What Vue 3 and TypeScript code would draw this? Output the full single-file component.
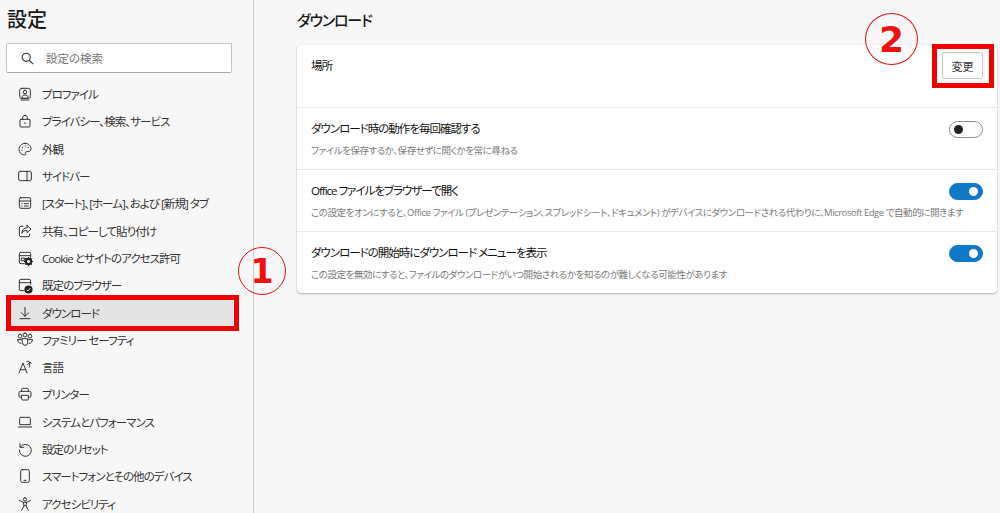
<script setup lang="ts">
interface NavItem { label: string; icon: string; active?: boolean }
const nav: NavItem[] = [
  { label: 'プロファイル', icon: 'M7 3.500h10a3 3 0 0 1 3 3v9a3 3 0 0 1-3 3H7a3 3 0 0 1-3-3v-9a3 3 0 0 1 3-3zM12 6.500a2.600 2.600 0 1 1 0 5.200 2.600 2.600 0 0 1 0-5.200zM7.500 16.500c0-2.500 2-3 4.500-3s4.500.5 4.500 3v2h-9zM6 21h12' },
  { label: 'プライバシー、検索、サービス', icon: 'M6 9.500h12a1.500 1.500 0 0 1 1.500 1.500v8.500A1.500 1.500 0 0 1 18 21H6a1.500 1.500 0 0 1-1.500-1.500V11A1.500 1.500 0 0 1 6 9.500zM8.500 9.500V7a3.500 3.500 0 0 1 7 0v2.500M12 14.500v1.500' },
  { label: '外観', icon: 'M12 3.500c5 0 9 3.500 9 8 0 3-2 4.500-4.500 4.500H14c-1.500 0-1.800 1.500-1 2.500s.3 2.500-1.500 2.500C6.500 21 3 17 3 12.500s4-9 9-9zM8 9.500h.5M7 14h.5M12.500 7.500h.5M16.500 10h.5' },
  { label: 'サイドバー', icon: 'M5 5h14a2.500 2.500 0 0 1 2.500 2.500v9A2.500 2.500 0 0 1 19 19H5a2.500 2.500 0 0 1-2.500-2.500v-9A2.500 2.500 0 0 1 5 5zM15 5v14' },
  { label: '[スタート]、[ホーム]、および [新規] タブ', icon: 'M6 4h12a2.500 2.500 0 0 1 2.500 2.500v11A2.500 2.500 0 0 1 18 20H6a2.500 2.500 0 0 1-2.500-2.500v-11A2.500 2.500 0 0 1 6 4zM3.500 9h17M7 13h.5M11 13h6M7 16.500h.5M11 16.500h6' },
  { label: '共有、コピーして貼り付け', icon: 'M9 5H6a2.500 2.500 0 0 0-2.500 2.500V18A2.500 2.500 0 0 0 6 20.500h10.500A2.500 2.500 0 0 0 19 18v-1.500M15 3.500l6 5.500-6 5.500V11c-4 0-6 1.500-7.500 4.500 0-5 2.500-8.500 7.500-8.500z' },
  { label: 'Cookie とサイトのアクセス許可', icon: 'M11 20.500H6A2.500 2.500 0 0 1 3.500 18V6A2.500 2.500 0 0 1 6 3.500h12A2.500 2.500 0 0 1 20.500 6v5M3.500 8.500h17M7 12h4v4H7z' },
  { label: '既定のブラウザー', icon: 'M11 20.500H6A2.500 2.500 0 0 1 3.500 18V6A2.500 2.500 0 0 1 6 3.500h12A2.500 2.500 0 0 1 20.500 6v5M3.500 8.500h17' },
  { label: 'ダウンロード', icon: 'M12 3.500v13.500M6.500 11.500l5.500 5.500 5.500-5.500M4.500 20.500h15', active: true },
  { label: 'ファミリー セーフティ', icon: 'M12 1.500a3 3 0 1 1 0 6 3 3 0 0 1 0-6zM4.500 3.500a2.800 2.800 0 1 1 0 5.600 2.800 2.800 0 0 1 0-5.600zM19.500 3.500a2.800 2.800 0 1 1 0 5.600 2.800 2.800 0 0 1 0-5.600zM1 11.500h6M17 11.500h6M1 11.500c0 3.500 1.500 5.500 5 5.500M23 11.500c0 3.500-1.500 5.500-5 5.500M8 10h8v6a4 4 0 0 1-8 0z' },
  { label: '言語', icon: 'M3 21l6-15 6 15M5.200 16h7.600M16 8.500l3.500-4 2 2M19 5v7M15 3.500h3' },
  { label: 'プリンター', icon: 'M7 8V5a1.500 1.500 0 0 1 1.500-1.500h7A1.500 1.500 0 0 1 17 5v3M7 17H5a2 2 0 0 1-2-2v-5a2 2 0 0 1 2-2h14a2 2 0 0 1 2 2v5a2 2 0 0 1-2 2h-2M7 14h10v6a1 1 0 0 1-1 1H8a1 1 0 0 1-1-1z' },
  { label: 'システムとパフォーマンス', icon: 'M5.500 5h13A1.500 1.500 0 0 1 20 6.500V16H4V6.500A1.500 1.500 0 0 1 5.500 5zM2 19.500h20' },
  { label: '設定のリセット', icon: 'M4.500 4v5.500H10M5 9a9 9 0 1 1-1.500 4.500' },
  { label: 'スマートフォンとその他のデバイス', icon: 'M8 2.500h8A2.500 2.500 0 0 1 18.500 5v14a2.500 2.500 0 0 1-2.500 2.500H8A2.500 2.500 0 0 1 5.500 19V5A2.500 2.500 0 0 1 8 2.500zM10.500 18.500h3' },
  { label: 'アクセシビリティ', icon: 'M12 2.500a2.500 2.500 0 1 1 0 5 2.500 2.500 0 0 1 0-5zM3.500 6.500l6 3h5l6-3M9.500 9.500l1 5-3.500 7M14.500 9.500l-1 5 3.500 7M10.500 14.500h3' },
]
interface Row { title: string; desc: string; on: boolean }
const rows: Row[] = [
  { title: 'ダウンロード時の動作を毎回確認する', desc: 'ファイルを保存するか、保存せずに開くかを常に尋ねる', on: false },
  { title: 'Office ファイルをブラウザーで開く', desc: 'この設定をオンにすると、Office ファイル (プレゼンテーション、スプレッドシート、ドキュメント) がデバイスにダウンロードされる代わりに、Microsoft Edge で自動的に開きます', on: true },
  { title: 'ダウンロードの開始時にダウンロード メニューを表示', desc: 'この設定を無効にすると、ファイルのダウンロードがいつ開始されるかを知るのが難しくなる可能性があります', on: true },
]
</script>

<template>
  <div class="page">
    <aside class="sidebar">
      <h1 class="app-title">設定</h1>
      <div class="search">
        <svg class="search-icon" viewBox="0 0 24 24"><path d="M10 3.500a6.500 6.500 0 1 1 0 13 6.500 6.500 0 0 1 0-13zM15 15l6 6" /></svg>
        <span>設定の検索</span>
      </div>
      <nav class="nav">
        <div v-for="item in nav" :key="item.label" class="nav-item" :class="{ active: item.active }">
          <svg class="nav-icon" viewBox="0 0 24 24"><path :d="item.icon" /></svg>
          <span class="nav-label">{{ item.label }}</span>
          <svg v-if="item.label === '既定のブラウザー'" class="nav-badge" viewBox="0 0 10 10">
            <circle cx="5" cy="5" r="4.500" fill="#222" />
            <path d="M3 5.200l1.500 1.400L7 3.600" fill="none" stroke="#fff" stroke-width="1" />
          </svg>
          <svg v-if="item.label.startsWith('Cookie')" class="nav-badge" viewBox="0 0 10 10">
            <circle cx="5" cy="5" r="3" fill="none" stroke="#222" stroke-width="2.400" />
            <path d="M5 0v2M5 8v2M0 5h2M8 5h2M1.500 1.500l1.400 1.400M7.100 7.100l1.400 1.400M1.500 8.500l1.400-1.400M7.100 2.900l1.400-1.400" stroke="#222" stroke-width="1.200" />
          </svg>
        </div>
      </nav>
      <div class="mark mark-nav" />
      <div class="circled circled-one">1</div>
    </aside>
    <main class="content">
      <h2 class="section-title">ダウンロード</h2>
      <section class="card">
        <div class="row row-location">
          <div class="row-title">場所</div>
          <button class="change">変更</button>
          <div class="mark mark-change" />
        </div>
        <div v-for="row in rows" :key="row.title" class="row">
          <div class="row-text">
            <div class="row-title">{{ row.title }}</div>
            <div class="row-desc">{{ row.desc }}</div>
          </div>
          <div class="toggle" :class="{ on: row.on }"><span class="knob" /></div>
        </div>
      </section>
      <div class="circled circled-two">2</div>
    </main>
  </div>
</template>

<style>
html, body { margin: 0; padding: 0; background: #f7f7f7; overflow: hidden; }
</style>

<style scoped>
.page {
  display: flex;
  width: 1000px;
  height: 513px;
  overflow: hidden;
  background: #f7f7f7;
  color: #262626;
  font-family: "Open Sans", "Noto Sans CJK JP", sans-serif;
  font-feature-settings: "palt";
}
.sidebar {
  position: relative;
  box-sizing: border-box;
  flex: 0 0 253px;
  height: 513px;
  border-right: 1px solid #cfcfcf;
  padding: 0 20px 0 6px;
}
.app-title {
  margin: 0;
  padding-left: 1px;
  height: 43px;
  font-size: 20px;
  line-height: 40px;
  font-weight: 500;
  color: #1a1a1a;
}
.search {
  box-sizing: border-box;
  display: flex;
  align-items: center;
  width: 226px;
  height: 30px;
  padding-left: 13px;
  gap: 11px;
  background: #fff;
  border: 1px solid #c4c4c4;
  border-bottom-color: #a8a8a8;
  border-radius: 2px;
  font-size: 11.500px;
  color: #777;
}
.search-icon { flex: none; width: 15px; height: 15px; fill: none; stroke: #333; stroke-width: 1.800; }
.nav { margin-top: 7.500px; margin-left: 5px; width: 222px; }
.nav-item {
  position: relative;
  display: flex;
  align-items: center;
  height: 27.300px;
  font-size: 11.500px;
  letter-spacing: -0.950px;
  color: #333;
  white-space: nowrap;
}
.nav-item.active { background: #e4e4e4; }
.nav-icon {
  flex: 0 0 16px;
  width: 16px;
  height: 16px;
  margin: 0 9px 0 6px;
  fill: none;
  stroke: #333;
  stroke-width: 1.500;
  stroke-linecap: round;
  stroke-linejoin: round;
}
.nav-badge { position: absolute; left: 13px; top: 13px; width: 9px; height: 9px; }
.mark { position: absolute; box-sizing: border-box; border: 5px solid #f00000; pointer-events: none; }
.mark-nav { left: 6px; top: 295px; width: 233px; height: 36px; }
.circled {
  position: absolute;
  box-sizing: border-box;
  display: flex;
  align-items: center;
  justify-content: center;
  border: 1.500px solid #f01010;
  border-radius: 50%;
  color: #f01010;
  font-family: "DejaVu Sans", sans-serif;
  font-weight: 700;
}
.circled-one { left: 238px; top: 247px; width: 48px; height: 48px; font-size: 33px; }
.circled-two { left: 611px; top: 13px; width: 53px; height: 52px; font-size: 36px; }
.content {
  position: relative;
  box-sizing: border-box;
  flex: 1;
  padding: 0 4px 0 43px;
}
.section-title {
  margin: 0;
  height: 45px;
  font-size: 15px;
  line-height: 41px;
  font-weight: 500;
  letter-spacing: -1.200px;
  color: #1a1a1a;
}
.card {
  width: 700px;
  background: #fff;
  border-radius: 4px;
  box-shadow: 0 1px 2px rgba(0, 0, 0, 0.28), 0 0 1px rgba(0, 0, 0, 0.16);
}
.row {
  position: relative;
  box-sizing: border-box;
  display: flex;
  align-items: center;
  justify-content: space-between;
  height: 62px;
  padding: 0 14px;
  border-top: 1px solid #e9e9e9;
}
.row-location { align-items: flex-start; border-top: none; padding-top: 12px; }
.row-text { min-width: 0; }
.row-title { font-size: 11.500px; line-height: 17px; font-weight: 400; letter-spacing: -1px; color: #111; }
.row-desc { margin-top: 7px; font-size: 9.500px; line-height: 14px; letter-spacing: -0.450px; color: #7a7a7a; white-space: nowrap; }
.change {
  flex: none;
  box-sizing: border-box;
  width: 41px;
  height: 27px;
  margin-top: -5px;
  padding: 0;
  background: #fff;
  border: 1px solid #c8c8c8;
  border-radius: 2px;
  font: inherit;
  font-size: 11px;
  color: #333;
}
.mark-change { left: 635px; top: -1px; width: 62px; height: 44px; border-width: 5.500px; }
.toggle {
  flex: none;
  box-sizing: border-box;
  position: relative;
  display: flex;
  align-items: center;
  width: 34px;
  height: 17px;
  margin-top: -18px;
  padding: 0 4px;
  background: #fff;
  border: 1px solid #8c8c8c;
  border-radius: 9px;
}
.toggle.on { justify-content: flex-end; background: #0f78c8; border-color: #0f78c8; }
.knob { width: 9px; height: 9px; border-radius: 50%; background: #222; }
.toggle.on .knob { background: #fff; }
</style>
